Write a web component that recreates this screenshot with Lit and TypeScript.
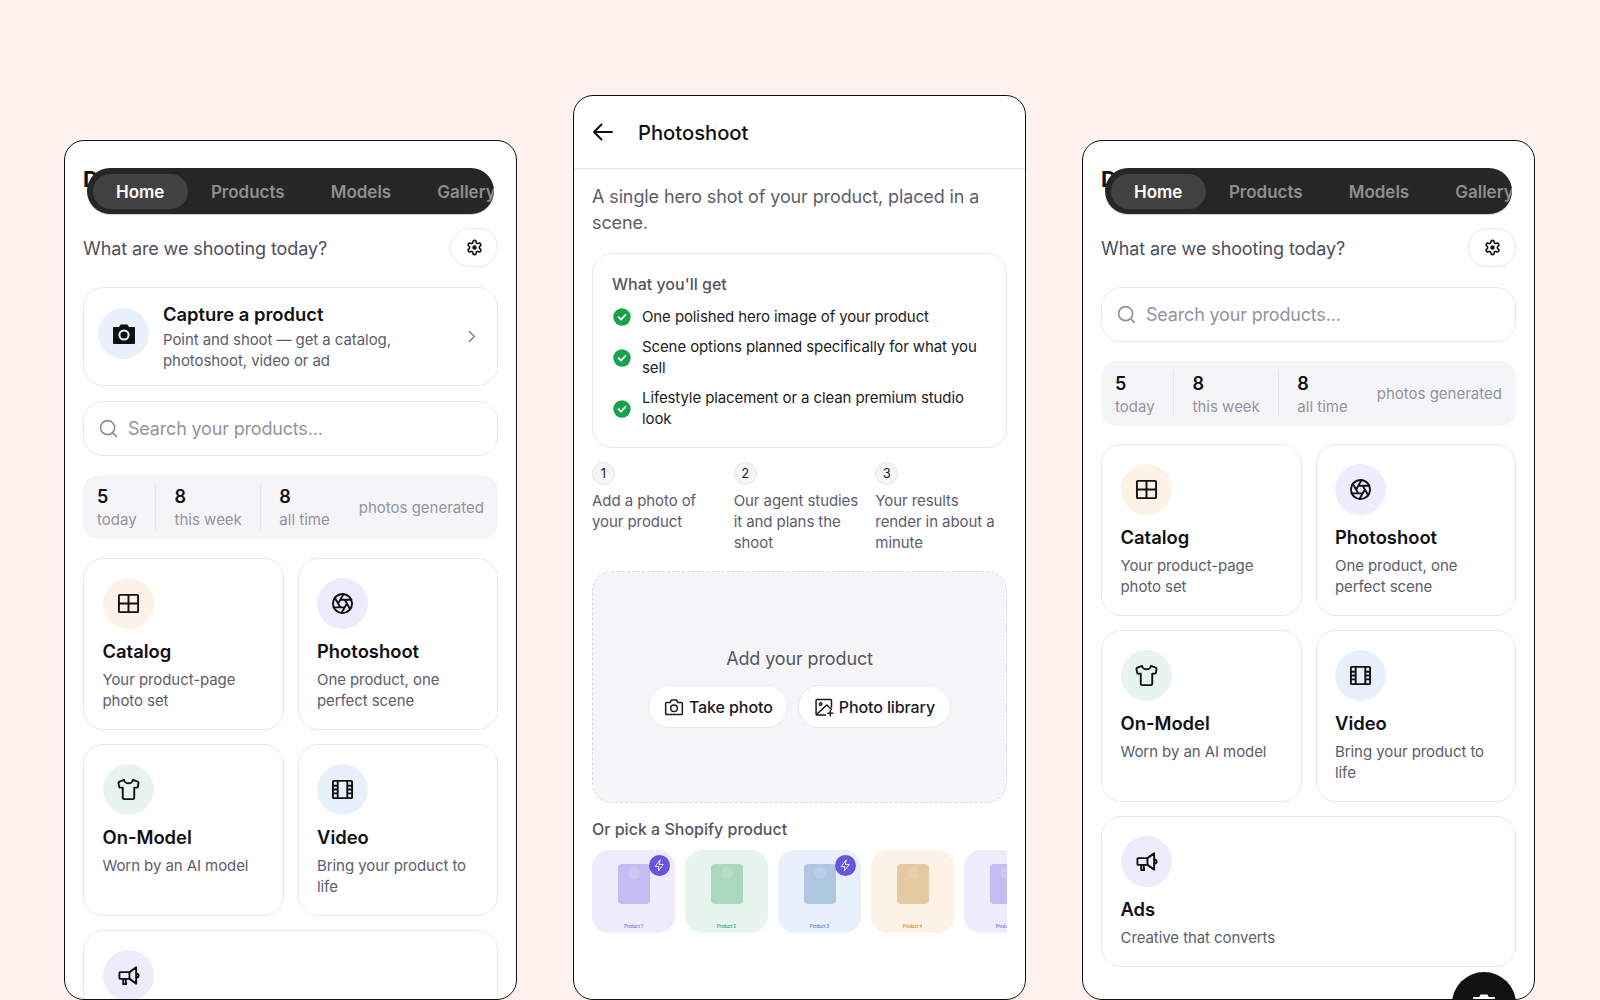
import { LitElement, html, css, svg } from "lit";
import { customElement } from "lit/decorators.js";

const ic = (body: unknown, size = 24, sw = 2) => html`<svg width=${size} height=${size} viewBox="0 0 24 24" fill="none" stroke="currentColor" stroke-width=${sw} stroke-linecap="round" stroke-linejoin="round">${body}</svg>`;

const icons = {
  catalog: svg`<rect x="2" y="3" width="20" height="18" rx="1" stroke-linejoin="miter"/><path d="M12 3v18M2 12h20" stroke-linecap="butt"/>`,
  aperture: svg`<circle cx="12" cy="12" r="10"/><path d="m14.31 8 5.74 9.94M9.69 8h11.48M7.38 12l5.74-9.94M9.69 16 3.95 6.06M14.31 16H2.83M16.62 12l-5.74 9.94"/>`,
  shirt: svg`<path d="M21 3.500 16.500 2a4.500 3.500 0 0 1-9 0L3 3.500a2 2 0 0 0-1.400 2.300l.7 3.400a1 1 0 0 0 1 .8H6v10.500A1.500 1.500 0 0 0 7.500 22h9a1.500 1.500 0 0 0 1.500-1.500V10h2.700a1 1 0 0 0 1-.8l.7-3.400A2 2 0 0 0 21 3.500z"/>`,
  film: svg`<rect x="2" y="3" width="20" height="18" rx="1"/><path d="M7 3v18M17 3v18M2 8h5M2 12h5M2 16h5M17 8h5M17 12h5M17 16h5" stroke-linecap="butt"/>`,
  ads: svg`<path d="M13 8.500 20 3.500v17l-7-5H3.500a1 1 0 0 1-1-1V9.500a1 1 0 0 1 1-1z"/><path d="M13 8.500v7"/><path d="M6.500 15.500v5.500h3l-.5-5.500"/><path d="M20.500 10a2 2 0 0 1 0 4"/>`,
  gear: svg`<path d="M12.22 2h-.44a2 2 0 0 0-2 2v.18a2 2 0 0 1-1 1.73l-.43.25a2 2 0 0 1-2 0l-.15-.08a2 2 0 0 0-2.73.73l-.22.38a2 2 0 0 0 .73 2.73l.15.1a2 2 0 0 1 1 1.72v.51a2 2 0 0 1-1 1.74l-.15.09a2 2 0 0 0-.73 2.73l.22.38a2 2 0 0 0 2.73.73l.15-.08a2 2 0 0 1 2 0l.43.25a2 2 0 0 1 1 1.73V20a2 2 0 0 0 2 2h.44a2 2 0 0 0 2-2v-.18a2 2 0 0 1 1-1.73l.43-.25a2 2 0 0 1 2 0l.15.08a2 2 0 0 0 2.73-.73l.22-.39a2 2 0 0 0-.73-2.73l-.15-.08a2 2 0 0 1-1-1.74v-.5a2 2 0 0 1 1-1.74l.15-.09a2 2 0 0 0 .73-2.73l-.22-.38a2 2 0 0 0-2.73-.73l-.15.08a2 2 0 0 1-2 0l-.43-.25a2 2 0 0 1-1-1.73V4a2 2 0 0 0-2-2z"/><circle cx="12" cy="12" r="2" fill="currentColor"/>`,
  search: svg`<circle cx="11" cy="11" r="8"/><path d="m21 21-4.300-4.300"/>`,
  chevron: svg`<path d="m9 5 7 7-7 7"/>`,
  back: svg`<path d="M21 12H3M10.500 4.500 3 12l7.500 7.500"/>`,
  cameraLine: svg`<path d="M3 6.500h4.500L9 3.500h6l1.500 3H21a1 1 0 0 1 1 1V20a1 1 0 0 1-1 1H3a1 1 0 0 1-1-1V7.500a1 1 0 0 1 1-1z"/><circle cx="12" cy="13.500" r="4"/>`,
  library: svg`<path d="M21 12V4a1 1 0 0 0-1-1H3.500a1 1 0 0 0-1 1v16.500a1 1 0 0 0 1 1H14"/><circle cx="8" cy="8.500" r="1.500"/><path d="M3 21 15.500 9.500 21 15"/><path d="M19.500 16.500v6M16.500 19.500h6"/>`,
  bolt: svg`<path d="M13 2 4 14h7l-1 8 9-12h-7z"/>`,
};

const cameraSolid = html`<svg class="solidcam" width="24" height="24" viewBox="0 0 24 24"><path fill="currentColor" d="M8.600 2.500h6.800l1.500 2.500H22a1 1 0 0 1 1 1v15a1 1 0 0 1-1 1H2a1 1 0 0 1-1-1V6a1 1 0 0 1 1-1h5.100z"/><circle cx="12" cy="13" r="4.600" fill="none" stroke="var(--lens)" stroke-width="2"/></svg>`;

const check = html`<svg class="check" width="18" height="18" viewBox="0 0 18 18"><circle cx="9" cy="9" r="8.700" fill="#16a34a"/><path d="m5.500 9.200 2.500 2.400 4.500-4.700" fill="none" stroke="#fff" stroke-width="1.800" stroke-linecap="round" stroke-linejoin="round"/></svg>`;

const tiles = [
  { t: "Catalog", s: "Your product-page photo set", i: icons.catalog, c: "peach" },
  { t: "Photoshoot", s: "One product, one perfect scene", i: icons.aperture, c: "lav" },
  { t: "On-Model", s: "Worn by an AI model", i: icons.shirt, c: "mint" },
  { t: "Video", s: "Bring your product to life", i: icons.film, c: "sky" },
  { t: "Ads", s: "Creative that converts", i: icons.ads, c: "lav", wide: true },
];

const products = [
  { n: "Product 1", c: "v", bolt: true },
  { n: "Product 2", c: "g", bolt: false },
  { n: "Product 3", c: "b", bolt: true },
  { n: "Product 4", c: "o", bolt: false },
  { n: "Product 5", c: "v", bolt: false },
];

@customElement("app-root")
export class AppRoot extends LitElement {
  static styles = css`
    :host { display: block; height: 1000px; overflow: hidden; background: #fff1ed; font-family: Inter, "Noto Sans", sans-serif; color: #111114; -webkit-font-smoothing: antialiased; }
    * { box-sizing: border-box; }
    .stage { display: flex; justify-content: center; align-items: flex-end; gap: 56px; height: 1000px; padding-right: 1px; }
    .phone { position: relative; width: 453px; height: 860px; background: #fff; border: 1px solid #111; border-radius: 20px; overflow: hidden; flex: none; }
    .phone.tall { height: 905px; }
    .home { display: flex; flex-direction: column; padding: 24px 18px 0; }
    .hello { font-size: 22px; font-weight: 700; line-height: 28px; height: 63px; margin: 0; }
    .pill { position: absolute; top: 26.500px; left: 21.500px; width: 407px; height: 46px; background: #262626; border-radius: 23px; display: flex; align-items: center; padding: 1px 6px 0; overflow: hidden; box-shadow: 0 1px 1px rgba(0,0,0,.2); }
    .pill span { flex: none; font-size: 17px; height: 35px; line-height: 37px; font-weight: 600; padding: 0 23px; color: #8e8e8e; border-radius: 18px; }
    .pill span.on { background: #414141; color: #fff; padding: 0 23.500px; }
    .greet { display: flex; justify-content: space-between; align-items: center; height: 39px; margin-bottom: 20px; }
    .greet p { margin: 2px 0 0; font-size: 18px; color: #4e4e5c; letter-spacing: -0.006em; }
    .gear { width: 48px; height: 39px; border: 1px solid #e9e9ee; border-radius: 20px; display: flex; align-items: center; justify-content: center; color: #111; }
    .line { border: 1px solid #e9e9ee; border-radius: 20px; background: #fff; }
    .capture { display: flex; padding: 14px; gap: 14px; height: 99px; margin-bottom: 14.500px; align-items: flex-start; }
    .circle { width: 51px; height: 51px; border-radius: 50%; display: flex; align-items: center; justify-content: center; flex: none; color: #111; }
    .capture .circle { margin-top: 6px; --lens: #e8f1fb; }
    .peach { background: #fdf2e6; } .lav { background: #eeebfd; } .mint { background: #e8f5ee; } .sky { background: #e8f1fb; }
    .capture .txt { flex: 1; }
    .title { font-size: 18.400px; line-height: 24px; font-weight: 600; color: #111114; }
    .sub { font-size: 15px; line-height: 21px; color: #5d5d6b; letter-spacing: -0.005em; }
    .capture .sub { margin-top: 3px; }
    .capture .chev { color: #77777f; align-self: center; margin: 0 3px 0 0; display: flex; }
    .search { display: flex; align-items: center; gap: 9px; height: 55px; padding: 0 14px; margin-bottom: 19px; color: #8f8f9e; font-size: 18px; flex: none; letter-spacing: -0.01em; }
    .search span { color: #9393a2; }
    .search svg { flex: none; }
    .stats { display: flex; align-items: center; height: 64.500px; padding: 0 14px; background: #f5f5f8; border-radius: 16px; margin-bottom: 18.500px; flex: none; }
    .stat { padding: 2px 18px 0 18.500px; border-left: 1px solid #e6e6eb; height: 46px; display: flex; flex-direction: column; justify-content: center; }
    .stat:first-child { padding-left: 0; border-left: 0; padding-right: 18.500px; }
    .stat b { font-size: 18px; line-height: 24px; font-weight: 600; color: #111114; }
    .stat small { font-size: 15px; line-height: 21px; color: #9393a2; }
    .gen { margin: 1px 0 0 auto; font-size: 15px; color: #9393a2; }
    .grid { display: grid; grid-template-columns: 1fr 1fr; gap: 14px; }
    .tile { padding: 19px 18px 18px 18.500px; min-width: 0; }
    .tile.wide { grid-column: 1 / -1; }
    .tile .title { margin-top: 10px; margin-bottom: 6px; }
    .fab { position: absolute; right: 18px; bottom: -37px; width: 64px; height: 64px; border-radius: 50%; background: #111; color: #fff; display: flex; align-items: center; justify-content: center; --lens: #111; }

    .head { display: flex; align-items: center; gap: 23px; height: 73px; padding: 0 17px; border-bottom: 1.500px solid #e5e5e8; }
    .head svg { flex: none; }
    .head h2 { margin: 0; font-size: 20.200px; font-weight: 500; color: #111114; }
    .flow { padding: 15px 18px 0; }
    .lead { margin: 0 0 17px; font-size: 18px; line-height: 26px; color: #5d5d6b; letter-spacing: -0.0065em; }
    .get { padding: 20px 19px 17px; margin-bottom: 14px; }
    .get h3 { margin: 0 0 12px; font-size: 16px; line-height: 21px; font-weight: 500; color: #55555f; }
    .item { display: flex; align-items: center; gap: 11px; font-size: 15px; line-height: 20.800px; margin-top: 9.500px; color: #1c1c22; letter-spacing: -0.007em; }
    .item:first-of-type { margin-top: 0; }
    .check { flex: none; margin-left: 1px; }
    .steps { display: grid; grid-template-columns: repeat(3, 1fr); gap: 10px; margin-bottom: 18px; }
    .num { width: 23px; height: 23px; border-radius: 50%; border: 1px solid #e6e6eb; background: #f5f5f8; font-size: 13px; display: flex; align-items: center; justify-content: center; margin-bottom: 5px; color: #222; }
    .drop { height: 232px; background: #f5f5f8; border: 1px dashed #dcdce2; border-radius: 20px; display: flex; flex-direction: column; align-items: center; justify-content: center; gap: 14px; padding-top: 2px; }
    .drop p { margin: 0; font-size: 18px; line-height: 24px; color: #55555f; letter-spacing: -0.007em; }
    .btns { display: flex; gap: 10px; }
    .btn { display: flex; align-items: center; gap: 5px; height: 43px; padding: 0 14.500px; background: #fff; border: 1px solid #e9e9ee; border-radius: 22px; font-size: 16px; font-weight: 500; color: #1a1a1f; letter-spacing: -0.006em; }
    .pick { margin: 16px 0 11px; font-size: 16px; line-height: 20px; font-weight: 500; color: #55555f; }
    .thumbs { display: flex; gap: 10px; overflow: hidden; }
    .thumb { position: relative; flex: none; width: 83px; height: 83px; border-radius: 17px; display: flex; flex-direction: column; align-items: center; padding: 14px 0 3px; }
    .rect { position: relative; width: 32px; height: 40px; border-radius: 4px; overflow: hidden; }
    .rect::after { content: ""; position: absolute; left: 10px; top: 3px; width: 12px; height: 12px; border-radius: 50%; background: rgba(255,255,255,.14); }
    .cap { margin-top: auto; font-size: 4.200px; line-height: 6px; font-weight: 500; }
    .v { background: #eeebfd; color: #7c5fe6; } .v .rect { background: #c5bdf2; }
    .g { background: #e8f5ee; color: #23a45f; } .g .rect { background: #a9d8bd; }
    .b { background: #e8f1fb; color: #3f83cc; } .b .rect { background: #aec8e2; }
    .o { background: #fdf2e6; color: #d98420; } .o .rect { background: #e5c9a0; }
    .badge { position: absolute; top: 5px; right: 5px; width: 21px; height: 21px; border-radius: 50%; background: #6655dd; color: #fff; display: flex; align-items: center; justify-content: center; }
  `;

  private top() {
    return html`
      <h1 class="hello">D</h1>
      <div class="pill"><span class="on">Home</span><span>Products</span><span>Models</span><span>Gallery</span></div>
      <div class="greet"><p>What are we shooting today?</p><div class="gear">${ic(icons.gear, 17, 2.3)}</div></div>`;
  }

  private searchBox() {
    return html`<div class="line search">${ic(icons.search, 21, 1.8)}<span>Search your products...</span></div>`;
  }

  private statsRow() {
    return html`<div class="stats">
      <div class="stat"><b>5</b><small>today</small></div>
      <div class="stat"><b>8</b><small>this week</small></div>
      <div class="stat"><b>8</b><small>all time</small></div>
      <div class="gen">photos generated</div>
    </div>`;
  }

  private tileGrid() {
    return html`<div class="grid">${tiles.map((x) => html`
      <div class="line tile ${x.wide ? "wide" : ""}">
        <div class="circle ${x.c}">${ic(x.i, 23, 2)}</div>
        <div class="title">${x.t}</div>
        <div class="sub">${x.s}</div>
      </div>`)}</div>`;
  }

  render() {
    return html`<div class="stage">
      <section class="phone">
        <div class="home">
          ${this.top()}
          <div class="line capture">
            <div class="circle sky">${cameraSolid}</div>
            <div class="txt"><div class="title">Capture a product</div><div class="sub">Point and shoot — get a catalog, photoshoot, video or ad</div></div>
            <div class="chev">${ic(icons.chevron, 17, 1.8)}</div>
          </div>
          ${this.searchBox()}
          ${this.statsRow()}
          ${this.tileGrid()}
        </div>
      </section>

      <section class="phone tall">
        <div class="head">${ic(icons.back, 24, 2)}<h2>Photoshoot</h2></div>
        <div class="flow">
          <p class="lead">A single hero shot of your product, placed in a scene.</p>
          <div class="line get">
            <h3>What you'll get</h3>
            <div class="item">${check}<span>One polished hero image of your product</span></div>
            <div class="item">${check}<span>Scene options planned specifically for what you sell</span></div>
            <div class="item">${check}<span>Lifestyle placement or a clean premium studio look</span></div>
          </div>
          <div class="steps">
            <div><div class="num">1</div><div class="sub">Add a photo of your product</div></div>
            <div><div class="num">2</div><div class="sub">Our agent studies it and plans the shoot</div></div>
            <div><div class="num">3</div><div class="sub">Your results render in about a minute</div></div>
          </div>
          <div class="drop">
            <p>Add your product</p>
            <div class="btns">
              <div class="btn">${ic(icons.cameraLine, 20, 1.8)}Take photo</div>
              <div class="btn">${ic(icons.library, 20, 1.8)}Photo library</div>
            </div>
          </div>
          <div class="pick">Or pick a Shopify product</div>
          <div class="thumbs">${products.map((p) => html`
            <div class="thumb ${p.c}">
              <div class="rect"></div>
              <div class="cap">${p.n}</div>
              ${p.bolt ? html`<div class="badge">${ic(icons.bolt, 13, 1.7)}</div>` : ""}
            </div>`)}</div>
        </div>
      </section>

      <section class="phone">
        <div class="home">
          ${this.top()}
          ${this.searchBox()}
          ${this.statsRow()}
          ${this.tileGrid()}
        </div>
        <div class="fab">${cameraSolid}</div>
      </section>
    </div>`;
  }
}
